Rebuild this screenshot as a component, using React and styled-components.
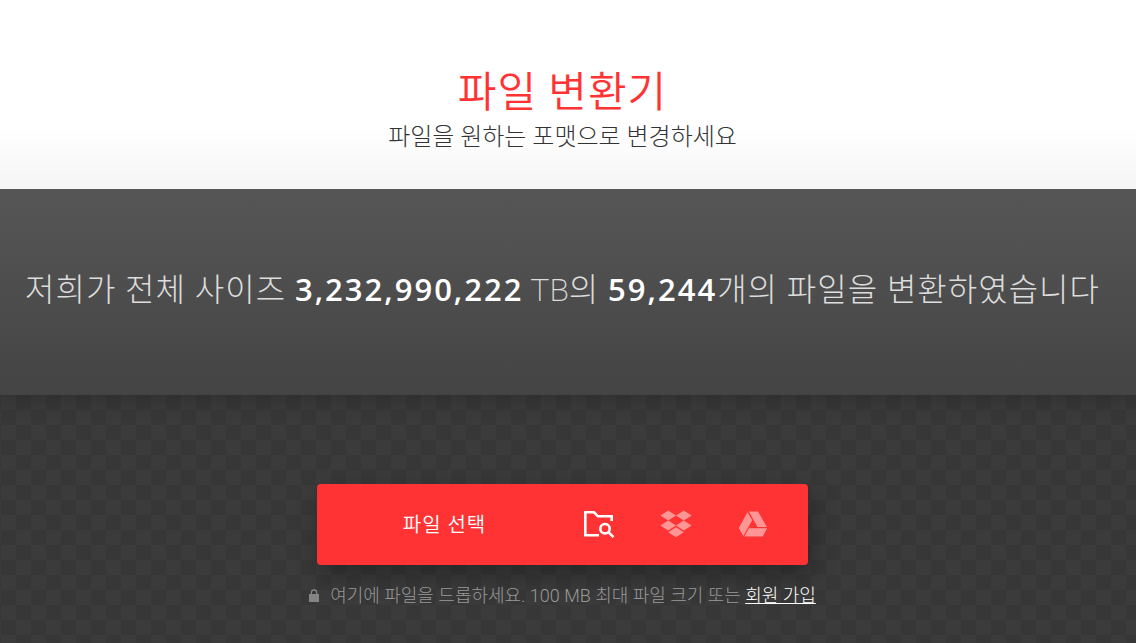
import React from "react";
import styled, { createGlobalStyle } from "styled-components";

const sans = `Roboto, "Noto Sans CJK KR", sans-serif`;

const GlobalStyle = createGlobalStyle`
  * { box-sizing: border-box; }
  body {
    margin: 0;
    background: #3a3a3a;
    font-family: ${sans};
    font-weight: 300;
  }
`;

const Page = styled.div`
  min-height: 100vh;
  display: flex;
  flex-direction: column;
`;

const Intro = styled.header`
  position: relative;
  z-index: 2;
  padding: 64px 11px 36px 0;
  text-align: center;
  background: linear-gradient(#fff 68%, #f5f5f5);
`;

const Title = styled.h1`
  margin: 0;
  color: #f33;
  font: 350 42px/58px ${sans};
  letter-spacing: 1px;
`;

const Subtitle = styled.p`
  margin: 0;
  color: #333;
  font: 300 24px/31px ${sans};
`;

const Stats = styled.section`
  position: relative;
  padding: 75px 11px 81px 0;
  text-align: center;
  color: #ddd;
  background: linear-gradient(#565656, #444);
  box-shadow: 0 4px 20px rgba(0, 0, 0, 0.2);
`;

const StatsText = styled.p`
  margin: 0;
  height: 50px;
  font: 300 32px/50px ${sans};
  letter-spacing: 1px;
  white-space: nowrap;
`;

const Figure = styled.strong`
  color: #fff;
  font-family: "Open Sans", sans-serif;
  font-size: 31px;
  font-weight: 600;
  letter-spacing: 2px;
`;

const Unit = styled.span`
  margin-left: -2px;
  font-weight: 200;
  letter-spacing: 0;
`;

const DropZone = styled.main`
  flex: 1;
  padding: 89px 11px 32px 0;
  display: flex;
  flex-direction: column;
  align-items: center;
  background: repeating-conic-gradient(#373737 0 25%, #3b3b3b 0 50%) 1px 0 / 30px 30px;
`;

const Picker = styled.div`
  display: flex;
  align-items: center;
  width: 100%;
  max-width: 491px;
  height: 81px;
  padding-right: 17px;
  border-radius: 4px;
  background: #f33;
  box-shadow: 4px 10px 24px rgba(0, 0, 0, 0.3);
`;

const ChooseButton = styled.button`
  flex: 1;
  height: 100%;
  padding: 0 0 0 12px;
  border: 0;
  background: none;
  color: #fff;
  font: 350 20px/30px ${sans};
  letter-spacing: 1px;
  cursor: pointer;
`;

const SourceButton = styled.button`
  width: 77px;
  height: 100%;
  padding: 0 0 2px;
  border: 0;
  display: flex;
  align-items: center;
  justify-content: center;
  background: none;
  color: ${({ $active }) => ($active ? "#fff" : "#ff9696")};
  cursor: pointer;
`;

const Note = styled.p`
  margin: 17px 0 0;
  display: flex;
  align-items: center;
  gap: 11px;
  color: #999;
  font: 300 18px/28px ${sans};
`;

const SignUp = styled.a`
  color: #fff;
  text-decoration: underline;
`;

const FolderSearchIcon = () => (
  <svg width="32" height="32" viewBox="0 0 32 32" fill="none" stroke="currentColor" strokeWidth="2.6" aria-hidden="true">
    <path d="M16 27.3H2.3V4.3H11L15 8.3H28.7V13" />
    <circle cx="22" cy="20.7" r="4.7" />
    <path d="M25.4 24.1L30.5 29.2" />
  </svg>
);

const DropboxIcon = () => (
  <svg width="32" height="28" viewBox="0 0 32 28" fill="currentColor" aria-hidden="true">
    <path d="M8.2 .5L16 5.5L8.2 10.5L.4 5.5ZM23.8 .5L31.6 5.5L23.8 10.5L16 5.5ZM8.2 10.6L16 15.6L8.2 20.6L.4 15.6ZM23.8 10.6L31.6 15.6L23.8 20.6L16 15.6ZM16 17.2L23.8 22.2L16 27.2L8.2 22.2Z" />
  </svg>
);

const DriveIcon = () => (
  <svg width="30" height="26" viewBox="0 0 30 26" fill="currentColor" aria-hidden="true">
    <path d="M9.5 1.2L14.2 9.2L5.4 25L.8 17ZM10.8 .5H20L28.8 16H19.5ZM11 17.2H29.2L24.7 25.5H6.3Z" />
  </svg>
);

const LockIcon = () => (
  <svg width="10" height="14" viewBox="0 0 10 14" aria-hidden="true">
    <path d="M2.3 6V3.7a2.7 2.7 0 0 1 5.4 0V6" fill="none" stroke="#858585" strokeWidth="1.3" />
    <rect y="5" width="10" height="8" fill="#858585" />
  </svg>
);

export default function App() {
  return (
    <>
      <GlobalStyle />
      <Page>
        <Intro>
          <Title>파일 변환기</Title>
          <Subtitle>파일을 원하는 포맷으로 변경하세요</Subtitle>
        </Intro>
        <Stats>
          <StatsText>
            저희가 전체 사이즈 <Figure>3,232,990,222</Figure> <Unit>TB</Unit>의 <Figure>59,244</Figure>개의 파일을 변환하였습니다
          </StatsText>
        </Stats>
        <DropZone>
          <Picker>
            <ChooseButton type="button">파일 선택</ChooseButton>
            <SourceButton type="button" $active aria-label="내 컴퓨터"><FolderSearchIcon /></SourceButton>
            <SourceButton type="button" aria-label="Dropbox"><DropboxIcon /></SourceButton>
            <SourceButton type="button" aria-label="Google Drive"><DriveIcon /></SourceButton>
          </Picker>
          <Note>
            <LockIcon />
            <span>
              여기에 파일을 드롭하세요. 100 MB 최대 파일 크기 또는 <SignUp href="#signup">회원 가입</SignUp>
            </span>
          </Note>
        </DropZone>
      </Page>
    </>
  );
}
